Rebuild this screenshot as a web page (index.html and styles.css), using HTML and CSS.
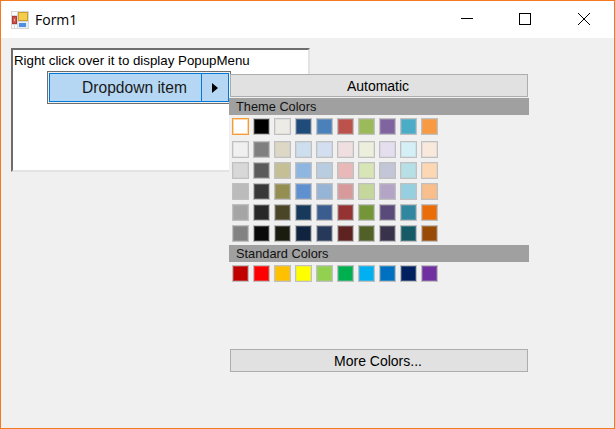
FILE: index.html
```html
<!DOCTYPE html>
<html lang="en">
<head>
    <meta charset="UTF-8">
    <title>Form1</title>
    <link rel="stylesheet" href="styles.css">
</head>
<body>
    <div class="window">
        <header class="titlebar">
            <svg class="app-icon" width="18" height="18" viewBox="0 0 18 18">
                <rect width="18" height="18" fill="#d6d6d6"/>
                <rect x="1" y="1" width="5" height="3" fill="#fafafa"/>
                <rect x="1" y="5" width="5" height="8" fill="#a83a36"/>
                <rect x="2" y="6" width="3" height="6" fill="#d8504a"/>
                <rect x="3" y="8" width="1" height="2" fill="#f0b0a8"/>
                <rect x="1" y="14" width="2" height="3" fill="#fafafa"/>
                <rect x="4" y="14" width="2" height="3" fill="#fafafa"/>
                <rect x="7" y="1" width="10" height="9" fill="#c9a02e"/>
                <rect x="8" y="2" width="8" height="7" fill="#f4cd4c"/>
                <rect x="7" y="11" width="10" height="6" fill="#e8eef8"/>
                <rect x="8" y="12" width="7" height="4" fill="#4f8ee0"/>
            </svg>
            <span class="title">Form1</span>
            <div class="caption-buttons">
                <svg width="13" height="13" viewBox="0 0 13 13"><path d="M1 5.500H13" stroke="#000"/></svg>
                <svg width="13" height="13" viewBox="0 0 13 13"><rect x="0.500" y="0.500" width="11" height="11" fill="none" stroke="#000"/></svg>
                <svg width="13" height="13" viewBox="0 0 13 13"><path d="M0 0L12 12M12 0L0 12" stroke="#000" fill="none"/></svg>
            </div>
        </header>

        <main class="client">
            <div class="textbox">Right click over it to display PopupMenu</div>

            <div class="popup">
                <div class="popup-item">
                    <span class="popup-label">Dropdown item</span>
                    <span class="popup-arrow"></span>
                </div>
            </div>

            <div class="color-panel">
                <button class="panel-button">Automatic</button>
                <div class="panel-header">Theme Colors</div>
                <div class="swatches swatches-main" id="theme-first"></div>
                <div class="swatches" id="theme-tints"></div>
                <div class="panel-header panel-header-standard">Standard Colors</div>
                <div class="swatches swatches-main" id="standard"></div>
                <button class="panel-button panel-button-more">More Colors...</button>
            </div>
        </main>
    </div>

    <script src="script.js"></script>
</body>
</html>
```

FILE: styles.css
```css
* {
    box-sizing: border-box;
}

html,
body {
    height: 100%;
}

body {
    margin: 0;
    font-family: 'Liberation Sans', Arial, sans-serif;
    font-size: 12px;
    color: #000;
}

.window {
    display: flex;
    flex-direction: column;
    height: 429px;
    border: 1px solid #f47a20;
    background-color: #f0f0f0;
}

.titlebar {
    display: flex;
    align-items: center;
    height: 37px;
    padding-left: 10px;
    background-color: #fff;
}

.app-icon {
    margin-right: 6px;
}

.title {
    font-family: 'Open Sans', sans-serif;
    font-size: 14px;
}

.caption-buttons {
    display: flex;
    gap: 46px;
    margin-left: auto;
    padding-right: 23px;
}

.client {
    position: relative;
    flex: 1;
    padding: 10px;
}

.textbox {
    width: 299px;
    height: 124px;
    padding: 3px 1px;
    background-color: #fff;
    border: 2px solid;
    border-color: #6d6d6d #e3e3e3 #e3e3e3 #6d6d6d;
    font-size: 13.300px;
    line-height: 15px;
    white-space: nowrap;
}

.popup {
    position: absolute;
    left: 46px;
    top: 33px;
    width: 184px;
    height: 33px;
    padding: 1px;
    background-color: #f0f0f0;
    border: 1px solid #6d6d6d;
}

.popup-item {
    display: flex;
    height: 100%;
    background-color: #b5d7f3;
    border: 1px solid #0078d7;
}

.popup-label {
    flex: 1;
    padding-left: 32px;
    font-size: 15.600px;
    line-height: 27px;
    color: #1a1a1a;
}

.popup-arrow {
    position: relative;
    width: 27px;
    border-left: 1px solid #0078d7;
}

.popup-arrow::after {
    content: "";
    position: absolute;
    left: 10px;
    top: 9px;
    border-style: solid;
    border-width: 5px 0 5px 6px;
    border-color: transparent transparent transparent #000;
}

.color-panel {
    position: absolute;
    left: 228px;
    top: 36px;
    display: flex;
    flex-direction: column;
    width: 300px;
    height: 298px;
    background-color: #f0f0f0;
}

.panel-button {
    flex: none;
    width: 298px;
    height: 23px;
    margin-left: 1px;
    padding: 0 2px 0 0;
    background-color: #e1e1e1;
    border: 1px solid #adadad;
    border-radius: 0;
    font-family: inherit;
    font-size: 14px;
    color: #000;
}

.panel-button-more {
    margin-top: auto;
}

.panel-header {
    height: 17px;
    margin-top: 1px;
    padding-left: 7px;
    background-color: #a0a0a0;
    font-size: 12.800px;
    line-height: 17px;
    color: #111;
}

.panel-header-standard {
    margin-top: 3px;
}

.swatches {
    display: grid;
    grid-template-columns: repeat(10, 17px);
    gap: 4px;
    padding-left: 3px;
    margin-top: 6px;
}

.swatches-main {
    margin-top: 3px;
}

.swatch {
    height: 17px;
    border: 1px solid #c0c0c0;
    box-shadow: inset 0 0 0 1px rgba(192, 192, 192, .3);
}

.swatch-selected {
    border: 1px solid #f79a3a;
    box-shadow: inset 0 0 0 1px #fbd9a8;
}
```

FILE: script.js
```js
const themeFirst = ['#ffffff', '#000000', '#ecebe5', '#1f4b7a', '#4b81bb', '#bc524c', '#9bbb5a', '#8064a0', '#4bacc8', '#f79a42'];

const themeTints = [
    '#f0f0f0', '#7f7f7f', '#ddd8c6', '#cddeef', '#d3dff0', '#f0dfe0', '#ecefdc', '#e5deee', '#d5eff6', '#f8e9dc',
    '#d8d8d8', '#5a5a5a', '#c5bf96', '#8fb6e0', '#b9cde0', '#e9b9b9', '#d8e6b7', '#c2c6d6', '#b6dfe6', '#fdd7b3',
    '#bbbbbb', '#383838', '#948e53', '#5f90d0', '#95b4d6', '#d69a9a', '#c6d79c', '#b4a5c6', '#96cfdf', '#f8be8c',
    '#a5a5a5', '#282828', '#4b4527', '#173a5c', '#3a5c8e', '#953232', '#749639', '#5a4a7a', '#30879f', '#e96d08',
    '#828282', '#0a0a0a', '#1a1c10', '#10233f', '#27395b', '#5e2221', '#506027', '#38324a', '#165a66', '#984b06'
];

const standard = ['#c00000', '#ff0000', '#ffc000', '#ffff00', '#92d050', '#00b050', '#00b0f0', '#0070c0', '#002060', '#7030a0'];

function addSwatches(id, colors) {
    const box = document.getElementById(id);
    colors.forEach(function(color) {
        const swatch = document.createElement('div');
        swatch.className = 'swatch';
        swatch.style.backgroundColor = color;
        box.appendChild(swatch);
    });
}

addSwatches('theme-first', themeFirst);
addSwatches('theme-tints', themeTints);
addSwatches('standard', standard);

document.getElementById('theme-first').firstChild.classList.add('swatch-selected');
```
